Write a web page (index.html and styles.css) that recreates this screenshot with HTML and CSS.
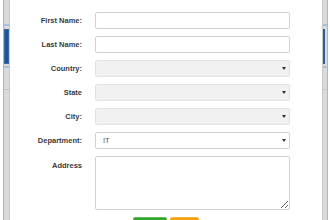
FILE: index.html
```html
<!DOCTYPE html>
<html lang="en">
<head>
    <meta charset="UTF-8">
    <meta name="viewport" content="width=device-width, initial-scale=1.0">
    <title>Employee Form</title>
    <link rel="stylesheet" href="styles.css">
</head>
<body>
    <div class="frame">
        <div class="rail rail-left">
            <div class="rail-mark"></div>
            <div class="rail-thumb"></div>
            <div class="rail-mark rail-mark-low"></div>
            <div class="rail-tick"></div>
        </div>

        <div class="dialog">
            <form class="employee-form">
                <label class="field-label" for="first-name">First Name:</label>
                <input class="field" id="first-name" type="text">

                <label class="field-label" for="last-name">Last Name:</label>
                <input class="field" id="last-name" type="text">

                <label class="field-label" for="country">Country:</label>
                <span class="select-wrap">
                    <select class="field field-select" id="country" disabled></select>
                </span>

                <label class="field-label" for="state">State</label>
                <span class="select-wrap">
                    <select class="field field-select" id="state" disabled></select>
                </span>

                <label class="field-label" for="city">City:</label>
                <span class="select-wrap">
                    <select class="field field-select" id="city" disabled></select>
                </span>

                <label class="field-label" for="department">Department:</label>
                <span class="select-wrap">
                    <select class="field field-select" id="department">
                        <option>IT</option>
                        <option>HR</option>
                        <option>Sales</option>
                    </select>
                </span>

                <label class="field-label field-label-top" for="address">Address</label>
                <textarea class="field field-area" id="address"></textarea>
            </form>

            <!-- only the top edge of the buttons is in view -->
            <div class="form-actions">
                <button class="btn btn-save" type="button" aria-label="Save"></button>
                <button class="btn btn-reset" type="button" aria-label="Reset"></button>
            </div>
        </div>

        <div class="rail rail-right">
            <div class="rail-mark"></div>
            <div class="rail-thumb"></div>
            <div class="rail-mark rail-mark-low"></div>
            <div class="rail-tick"></div>
        </div>
    </div>
</body>
</html>
```

FILE: styles.css
```css
* {
    margin: 0;
    padding: 0;
    box-sizing: border-box;
}

body {
    font-family: 'Liberation Sans', Arial, sans-serif;
    background: #fff;
    color: #333;
    width: 330px;
    height: 220px;
    overflow: hidden;
}

.frame {
    display: flex;
    height: 220px;
    padding: 0 2px 0 3px;
}

/* page edges showing behind the dialog */
.rail {
    display: flex;
    flex-direction: column;
    background: #dadada;
}

.rail-left {
    width: 7px;
    border-left: 1px solid #b4b4b4;
    border-right: 1px solid #c8c8c8;
}

.rail-right {
    width: 6px;
    border-left: 1px solid #c8c8c8;
    border-right: 1px solid #b4b4b4;
}

.rail-mark {
    height: 2px;
    margin-top: 24px;
    background: #a9c0dc;
}

.rail-thumb {
    height: 35px;
    margin-top: 3px;
    background: #1f5596;
    border: 1px solid #3a6aa6;
}

.rail-mark-low {
    margin-top: 2px;
}

.rail-tick {
    height: 1px;
    margin-top: 21px;
    background: #c6c6c6;
}

.rail-right .rail-thumb {
    width: 2px;
    border: none;
    background: #2d5f9c;
}

.dialog {
    flex: 1;
    background: #fff;
    padding-top: 12px;
}

.employee-form {
    display: grid;
    grid-template-columns: 72px 195px;
    column-gap: 13px;
    row-gap: 7px;
    align-items: center;
}

.field-label {
    font-size: 7.5px;
    font-weight: bold;
    color: #3a3a3a;
    text-align: right;
}

.field-label-top {
    align-self: start;
    padding-top: 5px;
}

.field {
    display: block;
    width: 195px;
    height: 17px;
    border: 1px solid #d2d2d2;
    border-radius: 2px;
    background: #fff;
    font-family: 'Liberation Sans', Arial, sans-serif;
    font-size: 7.5px;
    color: #555;
    padding: 0 7px;
    outline: none;
}

.select-wrap {
    position: relative;
    display: block;
}

.field-select {
    appearance: none;
    -webkit-appearance: none;
}

.field-select:disabled {
    background: #ececec;
    border-color: #d6d6d6;
}

.select-wrap::after {
    content: "";
    position: absolute;
    right: 4px;
    top: 7px;
    border-left: 2px solid transparent;
    border-right: 2px solid transparent;
    border-top: 3px solid #333;
}

.field-area {
    height: 54px;
    resize: vertical;
    padding: 4px 7px;
}

.form-actions {
    display: flex;
    justify-content: center;
    gap: 3px;
    margin-top: 7px;
}

.btn {
    height: 20px;
    border: 1px solid transparent;
    border-radius: 2px;
    cursor: pointer;
}

.btn-save {
    width: 34px;
    background: #35a52f;
    border-color: #5cbd57;
}

.btn-reset {
    width: 29px;
    background: #f3a20b;
    border-color: #f5b640;
}
```
